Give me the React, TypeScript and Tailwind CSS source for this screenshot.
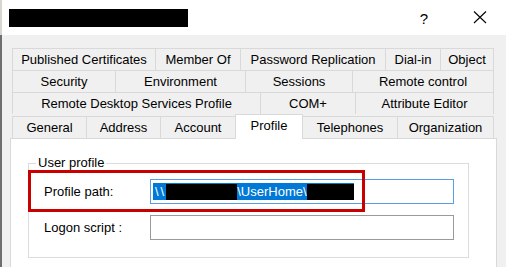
import React from "react";

type Tab = { label: string; w: string };

const row1: Tab[] = [
  { label: "Published Certificates", w: "w-[143px]" },
  { label: "Member Of", w: "w-[85px]" },
  { label: "Password Replication", w: "w-[145px]" },
  { label: "Dial-in", w: "w-[55px]" },
  { label: "Object", w: "w-[54px]" },
];
const row2: Tab[] = [
  { label: "Security", w: "w-[103px]" },
  { label: "Environment", w: "w-[130px]" },
  { label: "Sessions", w: "w-[107px]" },
  { label: "Remote control", w: "w-[142px]" },
];
const row3: Tab[] = [
  { label: "Remote Desktop Services Profile", w: "w-[248px]" },
  { label: "COM+", w: "w-[95px]" },
  { label: "Attribute Editor", w: "w-[139px]" },
];

function TabRow({ tabs }: { tabs: Tab[] }) {
  return (
    <div className="flex h-[22px]">
      {tabs.map((t, i) => (
        <div
          key={t.label}
          className={`${t.w} h-[22px] flex items-center justify-center border-t border-l border-[#d9d9d9] ${
            i === tabs.length - 1 ? "border-r" : ""
          } whitespace-nowrap`}
        >
          {t.label}
        </div>
      ))}
    </div>
  );
}

export default function App() {
  return (
    <div
      className="w-[506px] h-[267px] overflow-hidden flex text-[13px] text-black"
      style={{ fontFamily: '"Liberation Sans", Arial, sans-serif' }}
    >
      <div className="w-[2px] flex flex-col">
        <div className="h-[35px] bg-[#d8d4cf]" />
        <div className="flex-1 bg-[#6e6e6e]" />
      </div>
      <div className="flex-1 flex flex-col">
        {/* Title bar */}
        <div className="h-[35px] bg-white flex items-center shrink-0">
          <div className="ml-[7px] w-[179px] h-[18px] bg-black" />
          <div className="flex-1" />
          <div className="text-[15px] leading-none mr-[45px] mt-[1px]">?</div>
          <svg width="14" height="13" viewBox="0 0 14 13" className="mr-[19px]">
            <path d="M1 0.5 L13 12 M13 0.5 L1 12" stroke="#000" strokeWidth="1.1" fill="none" />
          </svg>
        </div>
        {/* Body */}
        <div className="flex-1 bg-[#f0f0f0] flex flex-col pt-[13px]">
          <div className="ml-[10px] w-[482px] flex flex-col">
            <TabRow tabs={row1} />
            <TabRow tabs={row2} />
            <TabRow tabs={row3} />
            <div className="flex h-[24px] items-end">
              <div className="w-[74px] h-[22px] flex items-center justify-center border-t border-l border-[#d9d9d9]">General</div>
              <div className="w-[74px] h-[22px] flex items-center justify-center border-t border-l border-[#d9d9d9]">Address</div>
              <div className="w-[75px] h-[22px] flex items-center justify-center border-t border-l border-[#d9d9d9]">Account</div>
              <div className="relative z-10 w-[68px] h-[25px] mb-[-1px] pb-[3px] flex items-center justify-center bg-white border-t border-l border-r border-[#d9d9d9]">Profile</div>
              <div className="w-[94px] h-[22px] flex items-center justify-center border-t border-[#d9d9d9]">Telephones</div>
              <div className="w-[97px] h-[22px] flex items-center justify-center border-t border-l border-r border-[#d9d9d9]">Organization</div>
            </div>
          </div>
          {/* Content panel */}
          <div className="ml-[8px] w-[487px] flex-1 bg-white border-t border-l border-r border-[#d9d9d9] pl-[17px] pt-[24px]">
            <div className="relative w-[441px] h-[95px] border border-[#dcdcdc]">
              <div className="absolute left-[7px] top-[-9px] bg-white px-[2px] leading-[16px]">User profile</div>
              <div className="absolute left-[-1px] top-[6px] w-[337px] h-[42px] border-[3px] border-[#c80000] z-10" />
              <div className="flex flex-col pt-[15px] gap-[11px]">
                <div className="flex items-center h-[25px]">
                  <div className="w-[121px] pl-[15px]">Profile path:</div>
                  <div className="w-[304px] h-[25px] border border-[#5a9de6] flex items-center pl-[2px]">
                    <span className="bg-[#0078d7] text-white h-[17px] flex items-center whitespace-nowrap pl-[2px]">
                      <span className="tracking-[2px]">\\</span>
                      <span className="inline-block w-[71px] h-[16px] bg-black" />
                      <span>\UserHome\</span>
                      <span className="inline-block w-[47px] h-[16px] bg-black" />
                    </span>
                  </div>
                </div>
                <div className="flex items-center h-[25px]">
                  <div className="w-[121px] pl-[15px]">Logon script :</div>
                  <div className="w-[304px] h-[25px] border border-[#9a9a9a]" />
                </div>
              </div>
            </div>
          </div>
        </div>
      </div>
    </div>
  );
}
